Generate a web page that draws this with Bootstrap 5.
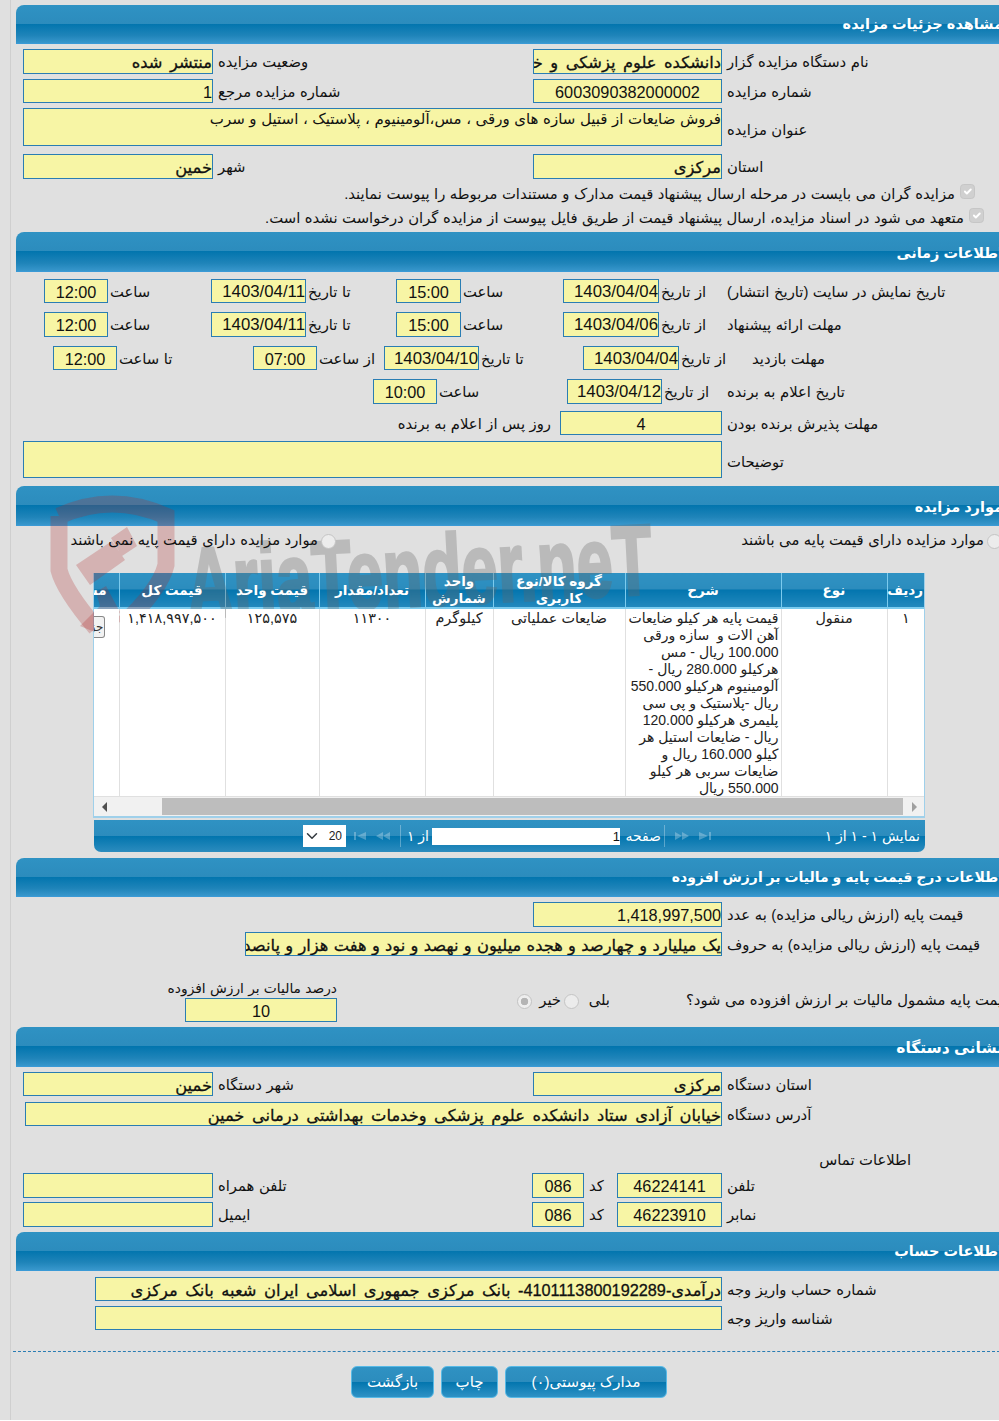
<!DOCTYPE html>
<html lang="fa">
<head>
<meta charset="utf-8">
<title>مشاهده جزئیات مزایده</title>
<link href="https://cdn.jsdelivr.net/npm/bootstrap@5.3.0/dist/css/bootstrap.min.css" rel="stylesheet">
<style>
html,body{height:1421px;overflow:hidden;background:#fff;}
body{font-family:"Liberation Sans","DejaVu Sans",sans-serif;font-size:14.8px;word-spacing:.4px;color:#111;line-height:1.2;}
.pg-bg{height:1420px;width:999px;overflow:hidden;background:#e0e0e0;}
.shell{margin-left:10px;border-left:1px solid #cfcfcf;padding:5px 0 0 5px;width:1000px;height:1420px;position:relative;}
.sec-head{height:40px;border-radius:8px 0 0 0;background:linear-gradient(#2f92c3 0,#2c8cbd 49%,#0275ae 50%,#1f84b9 80%,#3897cc 100%);border-bottom:1px solid #3a9ad6;color:#fff;font-weight:700;font-size:14.5px;padding:13px 7px 0 0;text-align:right;direction:rtl;white-space:nowrap;word-spacing:0;}
.sec-head.h39{height:39px;padding-top:11px;}
.hd-long{font-size:14px;}
.hd-wide{font-size:15.5px;padding-top:12px;}
.frm{display:grid;align-items:center;}
.lbl{direction:rtl;text-align:left;padding-left:5px;padding-top:2px;white-space:nowrap;}
.lbl-r{direction:rtl;text-align:right;padding-right:9px;white-space:nowrap;}
.h24 .lbl{padding-top:3px;}
.h24 .lbl-r{padding-top:3px;}
.lbl.lbl-low{padding-top:7px;}
.fv{background:#f7f5a5;border:1px solid #2a7db3;height:100%;font-size:16.3px;line-height:24px;direction:rtl;text-align:right;white-space:nowrap;overflow:hidden;color:#111;word-spacing:0;}
.fd{font-size:16.8px;}
.fb{font-size:16.3px;word-spacing:3px;-webkit-text-stroke:.3px #111;}
.fv.fw{word-spacing:.8px;}
.fc{text-align:center;}
.ft{font-size:15px;line-height:20px;word-spacing:.4px;}
.h24{height:24px}.h25{height:25px}.h37{height:37px}.h38{height:38px}
.t2{margin-top:2px}.t4{margin-top:4px}.t5{margin-top:5px}.t3{margin-top:3px}.t6{margin-top:6px}.t7{margin-top:7px}.t8{margin-top:8px}.t9{margin-top:9px}
.g-main{grid-template-columns:190px 320px 189px auto;margin-left:7px;}
.g-wide{grid-template-columns:699px auto;margin-left:7px;}
.g-addr{grid-template-columns:697px auto;margin-left:9px;}
.g-acct{grid-template-columns:627px auto;margin-left:79px;}
.g-num{grid-template-columns:189px auto;margin-left:517px;}
.g-words{grid-template-columns:477px auto;margin-left:229px;}
.g-time1{grid-template-columns:64px 103px 95px 90px 65px 102px 96px 66px auto;margin-left:28px;}
.g-time2{grid-template-columns:64px 136px 64px 67px 95px 104px 96px 71px auto;margin-left:37px;}
.g-time3{grid-template-columns:64px 130px 95px 63px auto;margin-left:357px;}
.g-time1 .lbl,.g-time2 .lbl,.g-time3 .lbl{padding-left:2px;}
.g-time4{grid-template-columns:544px 162px auto;}
.g-phone{grid-template-columns:190px 319px 52px 33px 105px auto;margin-left:7px;}
.chk-row{display:flex;flex-direction:row;align-items:center;justify-content:flex-start;direction:rtl;height:22px;white-space:nowrap;}
.chk-a{margin-top:5px;padding-right:35px;}
.chk-b{margin-top:2px;padding-right:26px;}
.chk-row .form-check-input{margin:0 0 0 5px;width:15px;height:15px;flex:none;opacity:1;background-color:#d0d0d0;border-color:#c6c6c6;}
.chk-row .form-check-input:checked{background-color:#d0d0d0;border-color:#c6c6c6;}
.chk-shift{position:relative;top:-4px;}
.rd,.rd:disabled{margin:0;width:15px;height:15px;flex:none;opacity:1;}
.rd:checked{background-color:#eee;border-color:#c2c2c2;background-image:radial-gradient(circle,#b4b4b4 0,#b4b4b4 38%,#eee 44%);}
.rd:not(:checked){background-color:#ececec;border-color:#c4c4c4;}
.rd-row{display:grid;grid-template-columns:320px 666px;height:22px;margin-top:4px;direction:ltr;position:relative;z-index:2;}
.rd-item{direction:rtl;display:flex;align-items:center;gap:3px;white-space:nowrap;}
.grid-box{margin:21px 0 0 77px;width:832px;border-left:1px solid #9fd0ea;border-right:1px solid #9fd0ea;overflow:hidden;background:transparent;position:relative;}
.grid-tb{table-layout:fixed;width:830px;margin:0;direction:rtl;border-collapse:collapse;word-spacing:0;}
.c1{width:37px}.c2{width:106px}.c3{width:156px}.c4{width:132px}.c5{width:68px}.c6{width:106px}.c7{width:94px}.c8{width:106px}.c9{width:25px}
.grid-tb th{height:35px;padding:0 2px;background:linear-gradient(#2f92c3 0,#2c8cbd 48%,#0275ae 49%,#2388bd 100%);color:#fff;font-size:13.5px;font-weight:700;text-align:center;line-height:17px;border-left:1px solid #7ccbee;border-bottom:2px solid #7ccbee;vertical-align:middle;overflow:hidden;white-space:normal;}
.hd-t{position:relative;z-index:2;}
.grid-tb td{position:relative;z-index:2;background:#fff;height:187px;padding:1px 2px 0;font-size:14.4px;line-height:17px;border-left:1px solid #e0e0e0;border-bottom:1px solid #e0e0e0;text-align:center;vertical-align:top;color:#222;overflow:hidden;}
.grid-tb td.cell-desc{text-align:right;white-space:nowrap;font-size:14px;padding-top:0;}
.desc-in{position:relative;top:1px;}
.grid-tb th:last-child{border-left:0;white-space:nowrap;text-align:right;padding-right:12px;}
.grid-tb td:last-child{border-left:0;padding:7px 0 0 0;}
.mini-btn{width:11px;height:22px;margin-right:14px;border:1px solid #888;border-left:0;border-radius:0 3px 3px 0;background:#f2f2f2;overflow:hidden;font-size:12px;line-height:20px;direction:rtl;text-align:right;white-space:nowrap;color:#333;}
.hscroll{height:21px;background:#f1f1f1;display:flex;align-items:center;border-bottom:2px solid #9fd0ea;position:relative;z-index:2;}
.hs-arrow{width:68px;flex:none;padding-left:8px;display:flex;}
.hs-thumb{height:17px;width:741px;background:#bdbdbd;flex:none;}
.hs-end{flex:1;padding-left:9px;display:flex;}
.pager{margin:2px 0 0 78px;width:831px;height:32px;border-radius:0 0 7px 7px;background:linear-gradient(#2f92c3 0,#2c8cbd 50%,#0275ae 51%,#2c8cbe 100%);display:flex;align-items:center;color:#fff;font-size:14px;word-spacing:0;white-space:nowrap;position:relative;}
.pg-sel{width:43px;height:22px;margin-left:209px;flex:none;padding:0 4px 0 20px;font-size:12px;border:0;border-radius:0;background-position:left 3px center;background-size:12px;line-height:22px;color:#222;direction:rtl;}
.pg-ic{display:flex;gap:10px;align-items:center;}
.ic-a{margin-left:8px;width:46px;}
.ic-b{margin-left:10px;width:38px;}
.sep{width:1px;height:22px;background:rgba(255,255,255,.3);flex:none;}
.pg-of{margin-left:7px;direction:rtl;width:24px;padding-right:3px;}
.pg-in{width:188px;height:17px;margin-left:0;background:#fff;color:#111;direction:rtl;text-align:right;font-size:13px;line-height:17px;padding:0;flex:none;}
.pg-word{margin-left:1px;width:43px;direction:rtl;padding-right:3px;}
.pg-info{margin-left:auto;padding-right:5px;direction:rtl;}
.sp-tax{display:grid;grid-template-columns:152px 1fr;height:42px;margin:24px 0 0 169px;}
.tax-col{direction:rtl;text-align:right;display:flex;flex-direction:column;}
.tax-cap{height:18px;line-height:18px;white-space:nowrap;direction:rtl;text-align:right;font-size:13.8px;}
.tax-in{height:24px;flex:none;}
.yn{white-space:nowrap;display:flex;align-items:center;height:42px;padding-left:180px;}
.yn-1{margin-left:8px;width:21px;direction:rtl;}
.yn-2,.yn-2:disabled{margin-left:3px;}
.yn-3{margin-left:7px;width:24px;direction:rtl;}
.yn-q{margin-left:76px;direction:rtl;}
.contact{margin:24px 0 0 805px;height:20px;line-height:20px;direction:rtl;width:90px;text-align:right;white-space:nowrap;}
.dash{border-top:1px dashed #2a7db3;margin:21px 0 0 -3px;height:0;}
.btn-row{display:flex;gap:7px;margin:14px 0 0 335px;}
.btn-blue{height:32px;color:#fff;font-size:15px;padding:0;border:1px solid #57b9e6;border-radius:6px;background:linear-gradient(#2f92c3 0,#2c8cbd 49%,#0275ae 50%,#2f92c5 100%);}
.btn-blue:hover{color:#fff;}
.b-back{width:83px}.b-print{width:57px}.b-docs{width:162px}
.wm{position:absolute;left:-11px;top:0;width:999px;height:700px;z-index:1;pointer-events:none;}
.wm-text{font-family:"Liberation Sans",sans-serif;font-weight:700;font-size:100px;fill:#666;stroke:#666;stroke-width:3px;opacity:.3;word-spacing:0;}
.wm-red{fill:rgba(175,40,40,.25);}
.wm-stroke{fill:none;stroke:rgba(175,40,40,.25);stroke-width:17;}
</style>
</head>
<body>
<div class="pg-bg">
<div class="shell">

<!-- watermark -->
<svg class="wm" viewBox="0 0 999 700" aria-hidden="true">
  <path class="wm-stroke" d="M59 516 Q112 492 166 516 L166 565 Q160 590 122 625 M59 516 L59 570 Q64 590 96 628"/>
  <path class="wm-red" d="M76 565 L112 541 L125 560 L90 585Z M111 538 L127 527 L137 546 L122 556Z"/>
  <path class="wm-red" d="M80 626 L100 606 L96 592 L106 586 L120 612 L107 637Z"/>
  <text class="wm-text" x="186" y="607" textLength="466" lengthAdjust="spacingAndGlyphs" transform="rotate(-3 400 570)">AriaTender.neT</text>
</svg>

<!-- section 1 -->
<div class="sec-head h39">مشاهده جزئیات مزایده</div>
<div class="frm g-main h25 t5"><div class="fv fb">منتشر شده</div><div class="lbl">وضعیت مزایده</div><div class="fv fb">دانشکده علوم پزشکی و خدمات بهداشتی درمانی خمین</div><div class="lbl">نام دستگاه مزایده گزار</div></div>
<div class="frm g-main h24 t5"><div class="fv">1</div><div class="lbl">شماره مزایده مرجع</div><div class="fv fc">6003090382000002</div><div class="lbl">شماره مزایده</div></div>
<div class="frm g-wide h38 t5"><div class="fv ft">فروش ضایعات از قبیل سازه های ورقی ، مس،آلومینیوم ، پلاستیک ، استیل و سرب</div><div class="lbl lbl-low">عنوان مزایده</div></div>
<div class="frm g-main h25 t8"><div class="fv fb">خمین</div><div class="lbl">شهر</div><div class="fv fb">مرکزی</div><div class="lbl">استان</div></div>
<div class="chk-row chk-a"><input class="form-check-input chk-shift" type="checkbox" checked disabled aria-label="تأیید"><span>مزایده گران می بایست در مرحله ارسال پیشنهاد قیمت مدارک و مستندات مربوطه را پیوست نمایند.</span></div>
<div class="chk-row chk-b"><input class="form-check-input chk-shift" type="checkbox" checked disabled aria-label="تأیید"><span>متعهد می شود در اسناد مزایده، ارسال پیشنهاد قیمت از طریق فایل پیوست از مزایده گران درخواست نشده است.</span></div>

<!-- section 2 -->
<div class="sec-head t2">اطلاعات زمانی</div>
<div class="frm g-time1 h24 t7"><div class="fv fc">12:00</div><div class="lbl">ساعت</div><div class="fv fd">1403/04/11</div><div class="lbl">تا تاریخ</div><div class="fv fc">15:00</div><div class="lbl">ساعت</div><div class="fv fd">1403/04/04</div><div class="lbl">از تاریخ</div><div class="lbl">تاریخ نمایش در سایت (تاریخ انتشار)</div></div>
<div class="frm g-time1 h25 t9"><div class="fv fc">12:00</div><div class="lbl">ساعت</div><div class="fv fd">1403/04/11</div><div class="lbl">تا تاریخ</div><div class="fv fc">15:00</div><div class="lbl">ساعت</div><div class="fv fd">1403/04/06</div><div class="lbl">از تاریخ</div><div class="lbl">مهلت ارائه پیشنهاد</div></div>
<div class="frm g-time2 h24 t9"><div class="fv fc">12:00</div><div class="lbl">تا ساعت</div><div class="fv fc">07:00</div><div class="lbl">از ساعت</div><div class="fv fd">1403/04/10</div><div class="lbl">تا تاریخ</div><div class="fv fd">1403/04/04</div><div class="lbl">از تاریخ</div><div class="lbl">مهلت بازدید</div></div>
<div class="frm g-time3 h25 t9"><div class="fv fc">10:00</div><div class="lbl">ساعت</div><div class="fv fd">1403/04/12</div><div class="lbl">از تاریخ</div><div class="lbl">تاریخ اعلام به برنده</div></div>
<div class="frm g-time4 h24 t7"><div class="lbl-r">روز پس از اعلام به برنده</div><div class="fv fc">4</div><div class="lbl">مهلت پذیرش برنده بودن</div></div>
<div class="frm g-wide h37 t6"><div class="fv ft"></div><div class="lbl lbl-low">توضیحات</div></div>

<!-- section 3 -->
<div class="sec-head t8">موارد مزایده</div>
<div class="rd-row"><div class="rd-item"><input class="form-check-input rd" type="radio" name="kind" disabled aria-label="نمی باشند"><span>موارد مزایده دارای قیمت پایه نمی باشند</span></div><div class="rd-item"><input class="form-check-input rd" type="radio" name="kind2" disabled aria-label="می باشند"><span>موارد مزایده دارای قیمت پایه می باشند</span></div></div>
<div class="grid-box">
<table class="grid-tb">
<colgroup><col class="c1"><col class="c2"><col class="c3"><col class="c4"><col class="c5"><col class="c6"><col class="c7"><col class="c8"><col class="c9"></colgroup>
<thead><tr><th><span class="hd-t">ردیف</span></th><th><span class="hd-t">نوع</span></th><th><span class="hd-t">شرح</span></th><th><span class="hd-t">گروه کالا/نوع کاربری</span></th><th><span class="hd-t">واحد شمارش</span></th><th><span class="hd-t">تعداد/مقدار</span></th><th><span class="hd-t">قیمت واحد</span></th><th><span class="hd-t">قیمت کل</span></th><th><span class="hd-t">مشاهده</span></th></tr></thead>
<tbody><tr><td>۱</td><td>منقول</td><td class="cell-desc"><div class="desc-in">قیمت پایه هر کیلو ضایعات<br>آهن الات و &nbsp;سازه ورقی<br>100.000 ریال - مس<br>هرکیلو 280.000 ریال -<br>آلومینیوم هرکیلو 550.000<br>ریال -پلاستیک و پی سی<br>پلیمری هرکیلو 120.000<br>ریال - ضایعات استیل هر<br>کیلو 160.000 ریال و<br>ضایعات سربی هر کیلو<br>550.000 ریال</div></td><td>ضایعات عملیاتی</td><td>کیلوگرم</td><td>۱۱۳۰۰</td><td>۱۲۵,۵۷۵</td><td>۱,۴۱۸,۹۹۷,۵۰۰</td><td><div class="mini-btn">جزئیات</div></td></tr></tbody>
</table>
<div class="hscroll"><div class="hs-arrow"><svg width="5" height="10" viewBox="0 0 5 10"><path d="M5 0V10L0 5Z" fill="#505050"/></svg></div><div class="hs-thumb"></div><div class="hs-end"><svg width="5" height="10" viewBox="0 0 5 10"><path d="M0 0V10L5 5Z" fill="#a0a0a0"/></svg></div></div>
</div>
<div class="pager">
  <select class="form-select pg-sel" aria-label="تعداد"><option>20</option></select>
  <div class="pg-ic ic-a"><svg width="12" height="8" viewBox="0 0 12 8"><path d="M0 0H2V8H0ZM12 0V8L3 4Z" fill="#fff" fill-opacity=".28"/></svg><svg width="14" height="8" viewBox="0 0 14 8"><path d="M7 0V8L0 4ZM14 0V8L7 4Z" fill="#fff" fill-opacity=".28"/></svg></div>
  <div class="sep"></div>
  <div class="pg-of">از ۱</div>
  <div class="pg-in">1</div>
  <div class="pg-word">صفحه</div>
  <div class="sep"></div>
  <div class="pg-ic ic-b"><svg width="14" height="8" viewBox="0 0 14 8"><path d="M0 0V8L7 4ZM7 0V8L14 4Z" fill="#fff" fill-opacity=".28"/></svg><svg width="12" height="8" viewBox="0 0 12 8"><path d="M0 0V8L9 4ZM10 0H12V8H10Z" fill="#fff" fill-opacity=".28"/></svg></div>
  <div class="pg-info">نمایش ۱ - ۱ از ۱</div>
</div>

<!-- section 4 -->
<div class="sec-head h39 t6 hd-long">اطلاعات درج قیمت پایه و مالیات بر ارزش افزوده</div>
<div class="frm g-num h25 t5"><div class="fv">1,418,997,500</div><div class="lbl">قیمت پایه (ارزش ریالی مزایده) به عدد</div></div>
<div class="frm g-words h24 t5"><div class="fv fb fw">یک میلیارد و چهارصد و هجده میلیون و نهصد و نود و هفت هزار و پانصد ریال</div><div class="lbl">قیمت پایه (ارزش ریالی مزایده) به حروف</div></div>
<div class="sp-tax">
  <div class="tax-col"><div class="tax-cap">درصد مالیات بر ارزش افزوده</div><div class="fv fc tax-in">10</div></div>
  <div class="yn">
    <input class="form-check-input rd" type="radio" name="vat" checked disabled aria-label="خیر"><span class="yn-1">خیر</span>
    <input class="form-check-input rd yn-2" type="radio" name="vat" disabled aria-label="بلی"><span class="yn-3">بلی</span>
    <span class="yn-q">قیمت پایه مشمول مالیات بر ارزش افزوده می شود؟</span>
  </div>
</div>

<!-- section 5 -->
<div class="sec-head t5 hd-wide">نشانی دستگاه</div>
<div class="frm g-main h24 t5"><div class="fv fb">خمین</div><div class="lbl">شهر دستگاه</div><div class="fv fb">مرکزی</div><div class="lbl">استان دستگاه</div></div>
<div class="frm g-addr h24 t6"><div class="fv fb">خیابان آزادی ستاد دانشکده علوم پزشکی وخدمات بهداشتی درمانی خمین</div><div class="lbl">آدرس دستگاه</div></div>
<div class="contact">اطلاعات تماس</div>
<div class="frm g-phone h25 t3"><div class="fv"></div><div class="lbl">تلفن همراه</div><div class="fv fc">086</div><div class="lbl">کد</div><div class="fv fc">46224141</div><div class="lbl">تلفن</div></div>
<div class="frm g-phone h25 t4"><div class="fv"></div><div class="lbl">ایمیل</div><div class="fv fc">086</div><div class="lbl">کد</div><div class="fv fc">46223910</div><div class="lbl">نمابر</div></div>

<!-- section 6 -->
<div class="sec-head h39 t5">اطلاعات حساب</div>
<div class="frm g-acct h24 t6"><div class="fv fb">درآمدی-4101113800192289- بانک مرکزی جمهوری اسلامی ایران شعبه بانک مرکزی</div><div class="lbl">شماره حساب واریز وجه</div></div>
<div class="frm g-acct h24 t5"><div class="fv"></div><div class="lbl">شناسه واریز وجه</div></div>
<div class="dash"></div>
<div class="btn-row"><button type="button" class="btn btn-blue b-back">بازگشت</button><button type="button" class="btn btn-blue b-print">چاپ</button><button type="button" class="btn btn-blue b-docs">مدارک پیوستی(۰)</button></div>

</div>
</div>
<script src="https://cdn.jsdelivr.net/npm/bootstrap@5.3.0/dist/js/bootstrap.bundle.min.js"></script>
</body>
</html>
